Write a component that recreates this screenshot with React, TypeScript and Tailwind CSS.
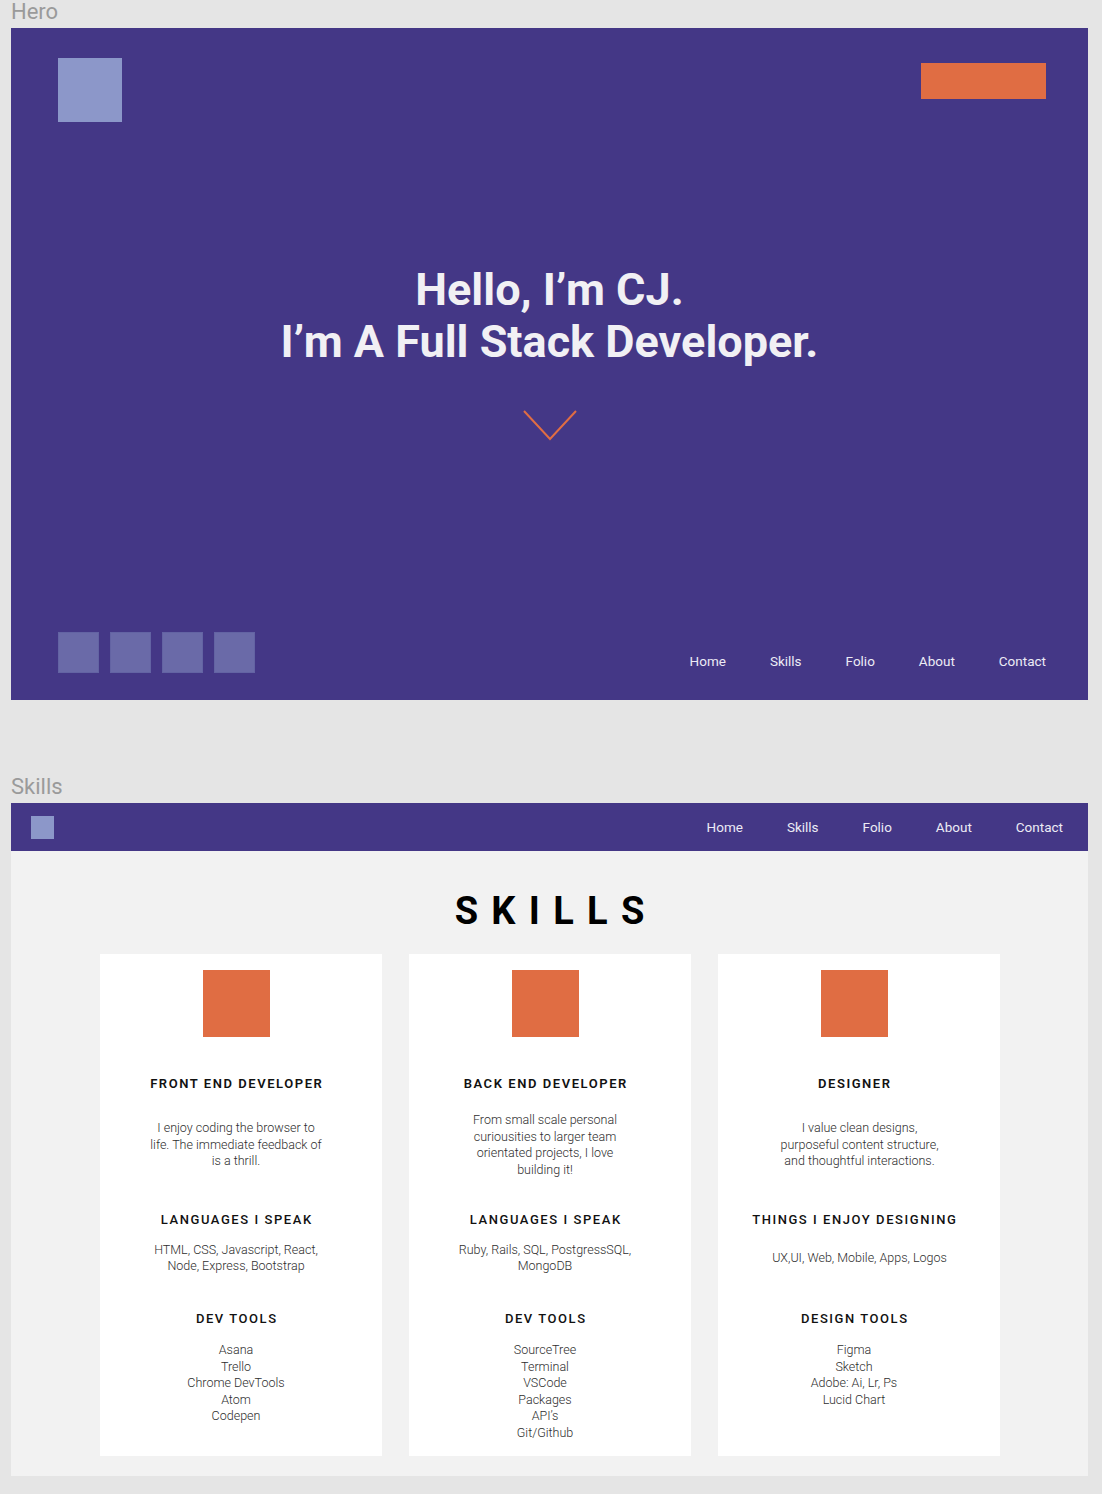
import React from "react";

const navItems = ["Home", "Skills", "Folio", "About", "Contact"];

type Card = {
  title: string;
  desc: string[];
  subTitle: string;
  subText: string[];
  toolsTitle: string;
  tools: string[];
  shift?: string;
};

const cards: Card[] = [
  {
    title: "FRONT END DEVELOPER",
    desc: ["I enjoy coding the browser to", "life. The immediate feedback of", "is a thrill."],
    subTitle: "LANGUAGES I SPEAK",
    subText: ["HTML, CSS, Javascript, React,", "Node, Express, Bootstrap"],
    toolsTitle: "DEV TOOLS",
    tools: ["Asana", "Trello", "Chrome DevTools", "Atom", "Codepen"],
  },
  {
    title: "BACK END DEVELOPER",
    desc: ["From small scale personal", "curiousities to larger team", "orientated projects, I love", "building it!"],
    subTitle: "LANGUAGES I SPEAK",
    subText: ["Ruby, Rails, SQL, PostgressSQL,", "MongoDB"],
    toolsTitle: "DEV TOOLS",
    tools: ["SourceTree", "Terminal", "VSCode", "Packages", "API’s", "Git/Github"],
  },
  {
    title: "DESIGNER",
    desc: ["I value clean designs,", "purposeful content structure,", "and thoughtful interactions."],
    subTitle: "THINGS I ENJOY DESIGNING",
    subText: ["UX,UI, Web, Mobile, Apps, Logos"],
    toolsTitle: "DESIGN TOOLS",
    tools: ["Figma", "Sketch", "Adobe: Ai, Lr, Ps", "Lucid Chart"],
    shift: "ml-[11px]",
  },
];

function FrameLabel({ children }: { children: React.ReactNode }) {
  return (
    <div className="mb-1 h-6 pl-[11px] text-[22px] leading-6 text-[#9a9a9a]">{children}</div>
  );
}

function Nav({ className = "" }: { className?: string }) {
  return (
    <nav className={"flex items-center gap-[44px] text-[13.5px] text-[#ecebf5] " + className}>
      {navItems.map((n) => (
        <span key={n}>{n}</span>
      ))}
    </nav>
  );
}

function SkillCard({ card }: { card: Card }) {
  const body = "text-[12.5px] leading-[16.5px] font-light text-[#2e2e2e]";
  const heading = "h-4 pl-[0.12em] text-[13px] leading-4 tracking-[0.12em] text-[#111]";
  return (
    <div className="flex h-[502px] w-[282px] flex-col items-center bg-white pt-4 pr-[9px] text-center">
      <div className="h-[67px] w-[67px] bg-[#e06d43]" />
      <h3 className={"mt-[39px] font-semibold " + heading}>{card.title}</h3>
      <div className={"flex h-[106px] flex-col justify-center " + body + " " + (card.shift ?? "")}>
        {card.desc.map((l) => (
          <p key={l}>{l}</p>
        ))}
      </div>
      <h4 className={"mt-[14px] font-medium " + heading}>{card.subTitle}</h4>
      <div className={"flex h-[60px] flex-col justify-center " + body + " " + (card.shift ?? "")}>
        {card.subText.map((l) => (
          <p key={l}>{l}</p>
        ))}
      </div>
      <h4 className={"mt-[23px] font-medium " + heading}>{card.toolsTitle}</h4>
      <div className={"mt-[15px] " + body}>
        {card.tools.map((l) => (
          <p key={l}>{l}</p>
        ))}
      </div>
    </div>
  );
}

export default function App() {
  return (
    <div
      className="min-h-[1494px] w-[1102px] bg-[#e5e5e5]"
      style={{ fontFamily: "Roboto, 'Liberation Sans', sans-serif" }}
    >
      <FrameLabel>Hero</FrameLabel>

      {/* Hero frame */}
      <section className="ml-[11px] flex h-[672px] w-[1077px] flex-col bg-[#443786]">
        <div className="flex items-start justify-between pt-[30px] pr-[42px] pl-[47px]">
          <div className="h-16 w-16 bg-[#8c97c9]" />
          <div className="mt-[5px] h-9 w-[125px] bg-[#e06d43]" />
        </div>

        <h1 className="mt-[142px] text-center text-[45px] leading-[52px] font-bold text-[#f1f0f4]">
          Hello, I’m CJ.
          <br />
          I’m A Full Stack Developer.
        </h1>

        <div className="mt-[42px] flex justify-center">
          <svg width="54" height="32" viewBox="0 0 54 32" fill="none">
            <polyline points="1,1 27,29 53,1" stroke="#e06d43" strokeWidth="2" />
          </svg>
        </div>

        <div className="flex-1" />

        <div className="flex items-end justify-between pr-[42px] pb-[27px] pl-[47px]">
          <div className="flex gap-[11px]">
            {[0, 1, 2, 3].map((i) => (
              <div key={i} className="h-[41px] w-[41px] border border-[#6363a3] bg-[#6a6aa8]" />
            ))}
          </div>
          <Nav className="mb-[2px]" />
        </div>
      </section>

      <div className="h-[75px]" />
      <FrameLabel>Skills</FrameLabel>

      {/* Skills frame */}
      <section className="ml-[11px] w-[1077px] bg-[#f2f2f2] pb-5">
        <div className="flex h-12 items-center justify-between bg-[#443786] pr-[25px] pl-5">
          <div className="h-[23px] w-[23px] bg-[#8c97c9]" />
          <Nav />
        </div>

        <h2 className="mt-[38px] pl-[0.35em] text-center text-[38px] leading-[44px] font-bold tracking-[0.35em] text-black">
          SKILLS
        </h2>

        <div className="mt-[21px] flex justify-center gap-[27px]">
          {cards.map((c) => (
            <SkillCard key={c.title} card={c} />
          ))}
        </div>
      </section>
    </div>
  );
}
